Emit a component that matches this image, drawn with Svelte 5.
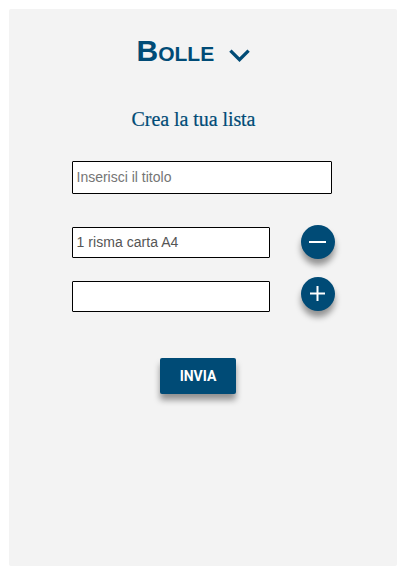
<script>
  let title = $state('');
  let items = $state(['1 risma carta A4', '']);

  function add() {
    items.push('');
  }

  function remove(index) {
    items.splice(index, 1);
  }
</script>

<main>
  <header>
    <h1>Bolle</h1>
    <svg class="chevron" width="21" height="14" viewBox="0 0 21 14" aria-hidden="true">
      <path d="M1.4 1.6 10.5 10.7 19.6 1.6" />
    </svg>
  </header>
  <h2>Crea la tua lista</h2>
  <form onsubmit={(e) => e.preventDefault()}>
    <input class="title" placeholder="Inserisci il titolo" bind:value={title} />
    <div class="rows">
      {#each items as item, i}
        <div class="row">
          <input bind:value={items[i]} />
          {#if i < items.length - 1}
            <button type="button" class="round" aria-label="Rimuovi" onclick={() => remove(i)}>
              <svg width="34" height="34" viewBox="0 0 34 34"><path d="M8 17H25" /></svg>
            </button>
          {:else}
            <button type="button" class="round" aria-label="Aggiungi" onclick={add}>
              <svg width="34" height="34" viewBox="0 0 34 34"><path d="M9 16.5H24M16.5 9V24" /></svg>
            </button>
          {/if}
        </div>
      {/each}
    </div>
    <button class="send">INVIA</button>
  </form>
</main>

<style>
  :global(body) {
    background: #fff;
  }
  main {
    box-sizing: border-box;
    width: 388px;
    height: 557px;
    margin: 9px;
    padding-left: 63px;
    border-radius: 2px;
    background: #f3f3f3;
    color: #004b76;
    overflow: hidden;
  }
  header {
    display: flex;
    align-items: flex-start;
    padding: 24px 0 0 64.5px;
    height: 36px;
  }
  h1 {
    margin: 0;
    width: 92.5px;
    font: bold 30px/36px "Liberation Sans", Arial, sans-serif;
    font-variant: small-caps;
  }
  .chevron {
    margin-top: 16px;
    fill: none;
    stroke: #004b76;
    stroke-width: 3.3;
  }
  h2 {
    margin: 37px 0 0 59.5px;
    font: 400 20px/26px "Liberation Serif", serif;
    letter-spacing: -0.06px;
    white-space: nowrap;
    -webkit-text-stroke: 0.2px #004b76;
  }
  form {
    margin-top: 29px;
  }
  input {
    box-sizing: border-box;
    display: block;
    width: 198px;
    height: 31px;
    margin: 0;
    padding: 0 4px 2px 3.5px;
    border: 1px solid #000;
    border-radius: 1px;
    background: #fff;
    color: #555;
    font: 14px "Liberation Sans", Arial, sans-serif;
  }
  input::placeholder {
    color: #757575;
  }
  .row input {
    margin-top: 2px;
    letter-spacing: 0.05px;
  }
  .title {
    width: 260px;
    height: 33px;
  }
  .rows {
    margin-top: 31px;
  }
  .row {
    display: flex;
    align-items: flex-start;
    gap: 31px;
    height: 52px;
  }
  .row + .row input {
    margin-top: 4px;
  }
  button {
    border: 0;
    padding: 0;
    background: #004b76;
    color: #fff;
    box-shadow: 0 6px 6px rgba(0, 0, 0, 0.4);
  }
  .round {
    width: 34px;
    height: 34px;
    border-radius: 50%;
  }
  .round svg {
    display: block;
    fill: none;
    stroke: #fff;
    stroke-width: 2;
  }
  .send {
    display: block;
    width: 76px;
    height: 36px;
    margin: 29px 0 0 88px;
    border-radius: 2px;
    font: bold 14px/36px Roboto, sans-serif;
  }
</style>
